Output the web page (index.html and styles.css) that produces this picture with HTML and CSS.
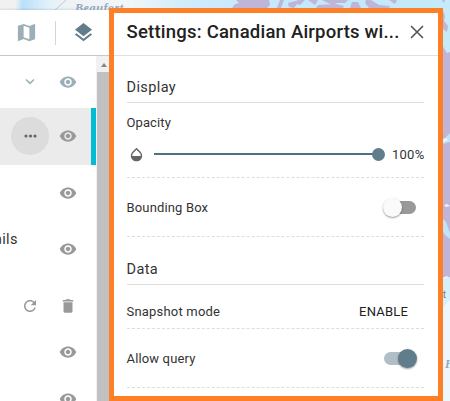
FILE: index.html
```html
<!DOCTYPE html>
<html lang="en">
<head>
<meta charset="utf-8">
<title>Layer settings</title>
<link rel="stylesheet" href="styles.css">
</head>
<body>
<svg width="0" height="0" class="defs">
  <symbol id="eye" viewBox="0 0 24 24"><path d="M12 4.5C7 4.5 2.73 7.61 1 12c1.73 4.39 6 7.5 11 7.5s9.27-3.11 11-7.5c-1.73-4.39-6-7.5-11-7.5zM12 17c-2.76 0-5-2.24-5-5s2.24-5 5-5 5 2.24 5 5-2.24 5-5 5zm0-8c-1.66 0-3 1.34-3 3s1.34 3 3 3 3-1.34 3-3-1.34-3-3-3z"/></symbol>
</svg>
<div class="app">
  <svg class="map" viewBox="0 0 450 401">
    <defs>
      <linearGradient id="sea" x1="0" x2="1" y1="0" y2="0">
        <stop offset="0" stop-color="#f1f1f1"/><stop offset=".035" stop-color="#f1f1f1"/><stop offset=".05" stop-color="#b9e0fb"/><stop offset=".11" stop-color="#e3f2fb"/><stop offset=".16" stop-color="#f1f2f3"/><stop offset=".29" stop-color="#f1f6fa"/><stop offset=".42" stop-color="#cdebfb"/><stop offset=".7" stop-color="#c3e8f9"/><stop offset="1" stop-color="#c5eafa"/>
      </linearGradient>
    </defs>
    <rect width="450" height="401" fill="url(#sea)"/>
    <path d="M66 0l-12 11" stroke="#c4c8ca"/>
    <g fill="#bfb5d8">
      <path d="M236 0h33l1 5-3 3h-35l3-4 4-1z"/>
      <path d="M280 0l-3 8h4l3-8zM288 3l11-3h6l-5 5-3-1-3 4-5-1zM308 0h10l-3 5zM322 0h26l-3 3h-8l-5 2zM318 5l18-1 8 2-1 2h-27zM352 2h6l3 6h-11zM366 0h5l8 5 11 1-1 2h-20l-4-5zM389 0h8l-2 4zM442 0h3l-1 3z"/>
      <path d="M442 8l3 8-1 5 4 5-1 6-5-4zM442 45l5 8 3-1v226l-8 1z"/>
    </g>
    <path d="M442 139l3-1 5-5v9l-8 2zM443 219l3 3 4 11v6l-5-4-3-5z" fill="#c0e3fa"/>
    <path d="M442 140l4-2 2 2-6 3zM444 205l3-1 3 2-4 1z" fill="#e8f5fb"/>
    <path d="M442 278l5-2 3 3v122h-8z" fill="#eef7fc"/>
    <path d="M442 279l8-2v23l-8 8z" fill="#d5effb"/>
    <text x="75" y="12" class="sea-name">Beaufort</text>
    <text x="445" y="368" class="sea-name">H</text>
    <text x="443" y="298" class="place">t</text>
  </svg>

  <aside class="layers">
    <header class="toolbar">
      <svg class="ic24 basemap" viewBox="0 0 24 24"><path d="M20.500 3l-.16.030L15 5.100 9 3 3.360 4.900c-.21.070-.36.250-.36.480V20.500c0 .28.220.5.500.5l.16-.03L9 18.900l6 2.100 5.640-1.900c.21-.07.360-.25.360-.48V3.500c0-.28-.22-.5-.5-.5zM15 19l-6-2.110V5l6 2.110V19z"/></svg>
      <span class="divider"></span>
      <svg class="ic24 stack" viewBox="0 0 24 24"><path d="M11.990 18.540l-7.370-5.730L3 14.070l9 7 9-7-1.630-1.270-7.380 5.740zM12 16l7.360-5.730L21 9l-9-7-9 7 1.630 1.270L12 16z"/></svg>
    </header>
    <div class="body">
      <div class="rows">
        <div class="row group"><span class="slot"><svg class="ic18" viewBox="0 0 24 24"><path d="M7.410 7.840L12 12.420l4.590-4.580L18 9.250l-6 6-6-6z"/></svg></span><svg class="ic18"><use href="#eye"/></svg></div>
        <div class="row selected"><span class="slot round"><svg class="dots" viewBox="0 0 13 4"><circle cx="2" cy="2" r="1.600"/><circle cx="6.500" cy="2" r="1.600"/><circle cx="11" cy="2" r="1.600"/></svg></span><svg class="ic18"><use href="#eye"/></svg></div>
        <div class="row"><svg class="ic18"><use href="#eye"/></svg></div>
        <div class="row"><span class="name">ails</span><svg class="ic18"><use href="#eye"/></svg></div>
        <div class="row"><span class="slot"><svg class="ic18" viewBox="0 0 24 24"><path d="M17.650 6.350C16.200 4.900 14.210 4 12 4c-4.420 0-7.990 3.580-7.990 8s3.570 8 7.990 8c3.730 0 6.840-2.550 7.730-6h-2.080c-.82 2.330-3.040 4-5.650 4-3.310 0-6-2.690-6-6s2.690-6 6-6c1.660 0 3.140.69 4.220 1.780L13 11h7V4l-2.350 2.350z"/></svg></span><svg class="ic18" viewBox="0 0 24 24"><path d="M6 19c0 1.100.9 2 2 2h8c1.100 0 2-.9 2-2V7H6v12zM19 4h-3.500l-1-1h-5l-1 1H5v2h14V4z"/></svg></div>
        <div class="row short"><svg class="ic18"><use href="#eye"/></svg></div>
        <div class="row short"><svg class="ic18"><use href="#eye"/></svg></div>
      </div>
      <div class="scrollbar"><span class="arrow"></span><span class="thumb"></span></div>
    </div>
  </aside>

  <main class="settings">
    <header class="heading">
      <h1>Settings: Canadian Airports wi...</h1>
      <svg class="close" viewBox="0 0 14 14"><path d="M1 1l12 12M13 1L1 13"/></svg>
    </header>
    <section class="content">
      <h2>Display</h2>
      <div class="opacity">
        <span class="label">Opacity</span>
        <div class="slider">
          <svg class="drop" viewBox="0 0 24 24"><path d="M17.660 8L12 2.350 6.340 8C4.780 9.560 4 11.640 4 13.640s.78 4.110 2.340 5.670 3.610 2.350 5.660 2.350 4.100-.79 5.660-2.350S20 15.640 20 13.640 19.220 9.560 17.660 8zM6 14c.01-2 .62-3.270 1.760-4.400L12 5.270l4.240 4.380C17.380 10.770 17.990 12 18 14H6z"/></svg>
          <span class="track"></span><span class="thumb-dot"></span>
          <span class="value">100%</span>
        </div>
      </div>
      <div class="option bounding"><span>Bounding Box</span><span class="switch"></span></div>
      <h2 class="data">Data</h2>
      <div class="option snapshot"><span>Snapshot mode</span><span class="enable">ENABLE</span></div>
      <div class="option query"><span>Allow query</span><span class="switch on"></span></div>
    </section>
  </main>
</div>
</body>
</html>
```
FILE: styles.css
```css
* { box-sizing: border-box; }
body { margin: 0; font-family: Roboto, "Liberation Sans", sans-serif; color: #333; }
svg { display: block; flex: none; }
.defs { position: absolute; }
.app { position: relative; display: flex; width: 450px; height: 401px; overflow: hidden; }
.map { position: absolute; inset: 0; width: 450px; height: 401px; }
.sea-name { font: italic bold 12px "Liberation Serif", serif; fill: #8faac2; letter-spacing: .6px; }
.place { font: 10px "Liberation Sans", sans-serif; fill: #777; }

.layers { position: relative; width: 109px; height: 391px; margin-top: 10px; background: #fff; box-shadow: 0 0 3px rgba(0,0,0,.2); }
.toolbar { display: flex; align-items: center; height: 46px; padding-left: 15px; border-bottom: 1px solid #c8c8c8; }
.ic24 { width: 23px; height: 23px; }
.basemap { fill: #9cafb9; }
.divider { width: 1px; height: 24px; margin: 0 17px 0 17px; background: #d5d5d5; }
.stack { width: 23px; height: 23px; fill: #607d8b; margin-left: -1px; }
.body { display: flex; height: 345px; }
.rows { width: 96px; overflow: hidden; }
.row { display: flex; align-items: center; justify-content: flex-end; height: 56.500px; padding-right: 19px; fill: #999; }
.group { height: 52px; fill: #9cafb9; }
.selected { background: #ebebeb; border-right: 5px solid #00bcd4; padding-right: 14px; }
.short { height: 47px; }
.row:nth-child(6) { height: 36px; }
.row:nth-child(7) { height: 58px; }
.ic18 { width: 18px; height: 18px; }
.slot { display: flex; align-items: center; justify-content: center; width: 38px; height: 38px; margin-right: 10px; }
.round { border-radius: 50%; background: #dcdcdc; }
.dots { width: 13px; height: 4px; fill: #666; }
.name { margin-right: auto; margin-left: -6px; padding-bottom: 19px; font-size: 14.500px; letter-spacing: .35px; }
.scrollbar { width: 13px; padding-left: 1px; background: #f1f1f1; }
.arrow { display: block; width: 6px; height: 4px; margin: 7px 0 5px 4px; background: #858585; clip-path: polygon(50% 0, 100% 100%, 0 100%); }
.thumb { display: block; height: 330px; background: #c1c1c1; }

.settings { position: relative; width: 334px; height: 393px; margin-top: 8px; border: 5px solid #ff7f27; background: #fff; }
.heading { display: flex; align-items: center; justify-content: space-between; height: 43px; padding: 0 14px 4px 12.500px; border-bottom: 1px solid #e0e0e0; }
h1 { margin: 0; font-size: 18.500px; line-height: 24px; font-weight: 500; letter-spacing: .22px; color: #212121; white-space: nowrap; }
.close { width: 14px; height: 14px; fill: none; stroke: #555; stroke-width: 1.600; }
.content { padding: 0 14px 0 12.500px; font-size: 13px; letter-spacing: .1px; }
h2 { height: 47px; margin: 0; padding-top: 21px; border-bottom: 1px solid #ddd; font-size: 14.500px; line-height: 21px; font-weight: 400; letter-spacing: .4px; color: #333; }
.opacity { height: 75px; padding-top: 11px; border-bottom: 1px dashed #ddd; }
.label { display: block; line-height: 17px; }
.slider { display: flex; align-items: center; height: 46px; padding-left: 1px; }
.drop { width: 17px; height: 17px; fill: #666; }
.track { width: 224px; height: 2px; margin-left: 9px; background: #4b7280; flex: none; }
.thumb-dot { width: 13px; height: 13px; margin-left: -6px; border-radius: 50%; background: #607d8b; flex: none; }
.value { margin-left: 7.500px; font-size: 13px; letter-spacing: .25px; }
.option { display: flex; align-items: center; justify-content: space-between; border-bottom: 1px dashed #ddd; }
.bounding { height: 59px; letter-spacing: .15px; }
.data { height: 48px; padding-top: 22px; }
.snapshot { height: 44px; padding-top: 9px; letter-spacing: .2px; }
.query { height: 59px; letter-spacing: .15px; }
.enable { margin-right: 16px; color: #212121; }
.switch { display: flex; align-items: center; width: 32px; height: 13px; margin-right: 8px; border-radius: 7px; background: #999; }
.switch::before { content: ""; width: 19px; height: 19px; margin-left: -1px; border-radius: 50%; background: #fafafa; box-shadow: 0 1px 2px rgba(0,0,0,.4); flex: none; }
.switch.on { background: #b0bec5; }
.switch.on::before { margin-left: 14px; background: #607d8b; }
```
